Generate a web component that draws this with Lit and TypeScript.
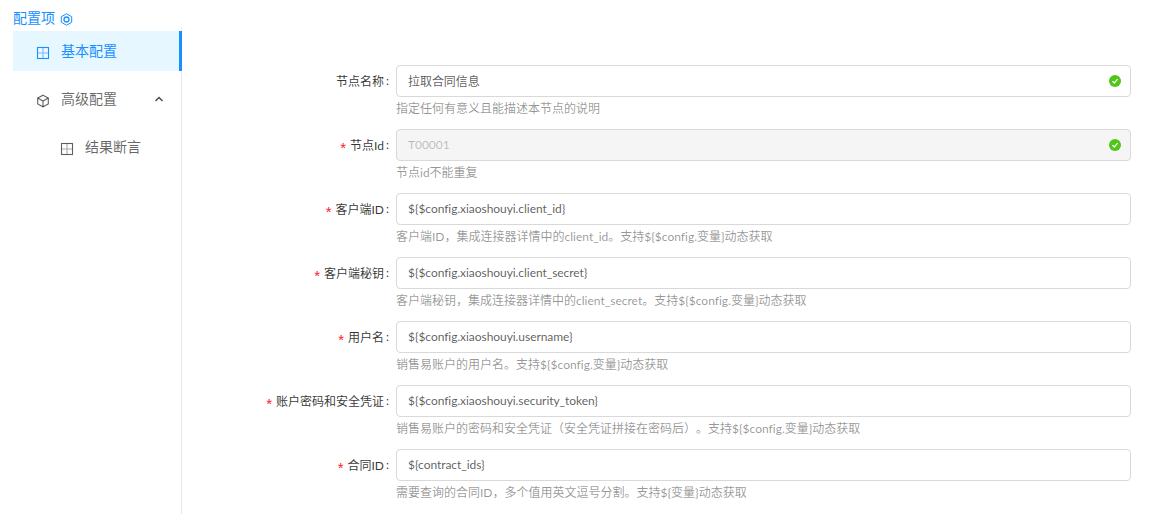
import { LitElement, html, css, svg } from "lit";
import { customElement } from "lit/decorators.js";

const rows = [
  { label: "节点名称", req: false, value: "拉取合同信息", help: "指定任何有意义且能描述本节点的说明", ok: true, dis: false },
  { label: "节点Id", req: true, value: "T00001", help: "节点id不能重复", ok: true, dis: true },
  { label: "客户端ID", req: true, value: "\${\$config.xiaoshouyi.client_id}", help: "客户端ID，集成连接器详情中的client_id。支持\${\$config.变量}动态获取" },
  { label: "客户端秘钥", req: true, value: "\${\$config.xiaoshouyi.client_secret}", help: "客户端秘钥，集成连接器详情中的client_secret。支持\${\$config.变量}动态获取" },
  { label: "用户名", req: true, value: "\${\$config.xiaoshouyi.username}", help: "销售易账户的用户名。支持\${\$config.变量}动态获取" },
  { label: "账户密码和安全凭证", req: true, value: "\${\$config.xiaoshouyi.security_token}", help: "销售易账户的密码和安全凭证（安全凭证拼接在密码后）。支持\${\$config.变量}动态获取" },
  { label: "合同ID", req: true, value: "\${contract_ids}", help: "需要查询的合同ID，多个值用英文逗号分割。支持\${变量}动态获取" },
];

const grid = svg`<path class="in" d="M7 1.5v11M1.5 7h11" /><rect x="1.5" y="1.5" width="11" height="11" />`;

@customElement("app-root")
export class AppRoot extends LitElement {
  static styles = css`
    :host { display: block; width: 1160px; height: 514px; overflow: hidden; background: #fff; font-family: Lato, "Noto Sans CJK SC", sans-serif; font-size: 12px; font-variant-ligatures: none; color: rgba(0,0,0,.65); text-spacing-trim: space-all; }
    .page { display: flex; height: 514px; }
    .side { width: 169px; margin-left: 13px; flex: none; display: flex; flex-direction: column; }
    .title { height: 31px; padding-bottom: 3px; box-sizing: border-box; display: flex; align-items: flex-end; gap: 5px; color: #1890ff; font-size: 14px; line-height: 20px; }
    .title svg { margin-bottom: 2px; }
    .menu { flex: 1; border-right: 1px solid #e8e8e8; margin-top: -4px; padding-top: 4px; }
    .item { height: 40px; display: flex; align-items: center; font-size: 14px; color: rgba(0,0,0,.6); padding-left: 23px; padding-bottom: 2px; box-sizing: border-box; margin-right: -1px; }
    .item svg.ic { width: 14px; height: 14px; margin-right: 11px; fill: none; stroke: rgba(0,0,0,.62); stroke-width: 1.1; flex: none; margin-top: 6px; }
    .item svg.ic .in { opacity: .55; }
    .item.sel { background: #e6f7ff; color: #1890ff; border-right: 3px solid #1890ff; }
    .item.sel svg.ic { stroke: #1890ff; }
    .item.gap { margin-top: 8px; }
    .item.sub { padding-left: 47px; }
    .item .txt { flex: 1; }
    .arrow { width: 10px; height: 8px; margin-right: 18px; margin-top: 2px; fill: none; stroke: rgba(0,0,0,.7); stroke-width: 1.5; }
    .form { flex: 1; padding-top: 65px; padding-right: 29px; display: flex; flex-direction: column; gap: 10px; }
    .row { display: grid; grid-template-columns: 214px 1fr; }
    .lab { height: 32px; box-sizing: border-box; padding-bottom: 2px; display: flex; align-items: center; justify-content: flex-end; padding-right: 7px; color: rgba(0,0,0,.8); font-size: 12px; white-space: nowrap; }
    .star { color: #f5222d; font-family: "Liberation Sans", sans-serif; font-size: 15px; margin-right: 4px; margin-top: 6px; line-height: 1; }
    .colon { margin-left: 2px; }
    .inp { height: 32px; box-sizing: border-box; border: 1px solid #d9d9d9; border-radius: 4px; display: flex; align-items: center; justify-content: space-between; padding: 0 9px 2px 11px; color: rgba(0,0,0,.65); background: #fff; letter-spacing: -.06px; }
    .inp.dis { background: #f5f5f5; color: rgba(0,0,0,.25); }
    .help { grid-column: 2; height: 22px; box-sizing: border-box; padding-top: 1px; line-height: 22px; color: rgba(0,0,0,.42); font-size: 12px; white-space: nowrap; }
    .ok { width: 12px; height: 12px; flex: none; margin-top: 2px; }
  `;

  render() {
    return html`<div class="page">
      <div class="side">
        <div class="title">配置项
          <svg width="13" height="13" viewBox="0 0 13 13" fill="none" stroke="#1890ff"><path d="M6.5.8 11.7 3.7v5.6L6.5 12.2 1.3 9.3V3.7z" /><circle cx="6.5" cy="6.5" r="2.5" stroke-width="1.3" /></svg>
        </div>
        <div class="menu">
          <div class="item sel"><svg class="ic" viewBox="0 0 14 14">${grid}</svg><span class="txt">基本配置</span></div>
          <div class="item gap"><svg class="ic" viewBox="0 0 14 14"><path d="M7 1.2 12.3 4v6L7 12.8 1.7 10V4z" /><path d="M1.7 4 7 7l5.3-3M7 7v5.8" /></svg><span class="txt">高级配置</span>
            <svg class="arrow" viewBox="0 0 10 8"><path d="M1.5 6 5 2.5 8.5 6" /></svg></div>
          <div class="item gap sub"><svg class="ic" viewBox="0 0 14 14">${grid}</svg><span class="txt">结果断言</span></div>
        </div>
      </div>
      <div class="form">
        ${rows.map((r) => html`<div class="row">
          <div class="lab">${r.req ? html`<span class="star">*</span>` : ""}${r.label}<span class="colon">:</span></div>
          <div class="inp ${r.dis ? "dis" : ""}"><span>${r.value}</span>${r.ok ? html`<svg class="ok" viewBox="0 0 12 12"><circle cx="6" cy="6" r="6" fill="#52c41a" /><path d="M3.4 6.1 5.3 8l3.3-3.8" fill="none" stroke="#fff" stroke-width="1.2" /></svg>` : ""}</div>
          <div class="help">${r.help}</div>
        </div>`)}
      </div>
    </div>`;
  }
}
